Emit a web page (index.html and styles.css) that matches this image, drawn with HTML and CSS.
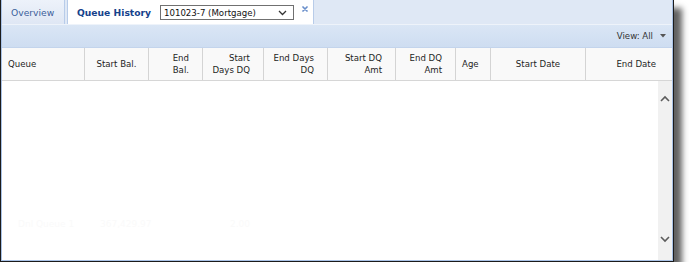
FILE: index.html
```html
<!DOCTYPE html>
<html>
<head>
<meta charset="utf-8">
<link rel="stylesheet" href="styles.css">
</head>
<body>
<div class="frame">
  <div class="panel">
    <div class="tabs">
      <div class="tab tab-overview">Overview</div>
      <div class="tab tab-active">
        <span class="tab-title">Queue History</span>
        <div class="select">
          <span class="select-text">101023-7 (Mortgage)</span>
          <svg class="select-caret" width="9" height="6" viewBox="0 0 9 6"><polyline points="1,1 4.5,4.5 8,1" fill="none" stroke="#333" stroke-width="1.3"/></svg>
        </div>
        <svg class="close" width="6" height="6" viewBox="0 0 6 6"><path d="M1 1 L5 5 M5 1 L1 5" stroke="#6a8fcb" stroke-width="1.7" stroke-linecap="round"/></svg>
      </div>
    </div>
    <div class="toolbar">
      <span class="view">View: All</span>
      <svg class="view-caret" width="6" height="4" viewBox="0 0 6 4"><polygon points="0,0 6,0 3,3.5" fill="#555"/></svg>
    </div>
    <div class="grid-head">
      <div class="hcell left">Queue</div>
      <div class="hcell center">Start Bal.</div>
      <div class="hcell right">End<br>Bal.</div>
      <div class="hcell right">Start<br>Days DQ</div>
      <div class="hcell right">End Days<br>DQ</div>
      <div class="hcell right">Start DQ<br>Amt</div>
      <div class="hcell right">End DQ<br>Amt</div>
      <div class="hcell left">Age</div>
      <div class="hcell center">Start Date</div>
      <div class="hcell right last">End Date</div>
    </div>
    <div class="grid-body">
      <div class="rows">
        <div class="ghost-row">
          <span class="g1">Dnl Queue 1</span>
          <span class="g2">367,429.97</span>
          <span class="g3">2.00</span>
        </div>
      </div>
      <div class="scrollbar">
        <svg width="10" height="7" viewBox="0 0 10 7"><polyline points="1,6 5,2 9,6" fill="none" stroke="#5c5c5c" stroke-width="1.6"/></svg>
        <svg width="10" height="7" viewBox="0 0 10 7"><polyline points="1,1 5,5 9,1" fill="none" stroke="#5c5c5c" stroke-width="1.6"/></svg>
      </div>
    </div>
  </div>
</div>
</body>
</html>
```
FILE: styles.css
```css
html, body {
  margin: 0;
  padding: 0;
  background: #ffffff;
}
body {
  font-family: "DejaVu Sans", Verdana, sans-serif;
  color: #222;
}
.frame {
  width: 674px;
  height: 262px;
  box-sizing: border-box;
  border-left: 1px solid #1b1b1b;
  border-right: 1px solid #1b1b1b;
  border-bottom: 1px solid #1b1b1b;
  box-shadow: 8px 8px 6px rgba(0, 0, 0, 0.62);
  background: #fff;
}
.panel {
  height: 100%;
  box-sizing: border-box;
  border-left: 1px solid #a9c2e6;
  border-right: 1px solid #a9c2e6;
  border-bottom: 1px solid #a9c2e6;
  display: flex;
  flex-direction: column;
}
.tabs {
  height: 25px;
  flex: none;
  display: flex;
  align-items: stretch;
  gap: 2px;
  background: #dfe8f5;
  border-bottom: 1px solid #eef3fa;
  box-sizing: border-box;
}
.tab {
  display: flex;
  align-items: center;
  box-sizing: border-box;
  font-size: 9.2px;
}
.tab-overview {
  width: 63px;
  padding-left: 9px;
  color: #3c5f9b;
  background: linear-gradient(#edf2fa, #dfe7f4);
  border-right: 1px solid #b8cce9;
}
.tab-active {
  width: 247px;
  background: #ffffff;
  border-left: 1px solid #b8cce9;
  border-right: 1px solid #b8cce9;
  padding-left: 9px;
}
.tab-title {
  font-weight: bold;
  color: #15428b;
  width: 83px;
  flex: none;
}
.select {
  width: 134px;
  height: 15px;
  box-sizing: border-box;
  border: 1px solid #707070;
  display: flex;
  align-items: center;
  justify-content: space-between;
  padding: 0 6px 0 3px;
  margin-top: 1px;
}
.select-text {
  font-size: 8.6px;
  color: #111;
}
.close {
  margin-left: 8px;
  margin-top: -6px;
}
.toolbar {
  height: 23px;
  flex: none;
  display: flex;
  align-items: center;
  justify-content: flex-end;
  padding-right: 6px;
  background: linear-gradient(#dae6f5, #ceddf1);
  border-bottom: 1px solid #c3d4ec;
  box-sizing: border-box;
}
.view {
  font-size: 8.6px;
  color: #333;
  margin-right: 7px;
}
.view-caret {
  margin-top: -1px;
}
.grid-head {
  height: 33px;
  flex: none;
  display: grid;
  grid-template-columns: 83px 64px 54px 61px 64px 68px 60px 35px 95px 1fr;
  background: #f9f9f9;
  border-bottom: 1px solid #d6d6d6;
  box-sizing: border-box;
}
.hcell {
  font-size: 8.6px;
  line-height: 12px;
  color: #1e1e1e;
  border-right: 1px solid #d4d4d4;
  display: flex;
  flex-direction: column;
  justify-content: center;
  box-sizing: border-box;
  padding: 0 6px;
}
.hcell.left { text-align: left; }
.hcell.center { text-align: center; }
.hcell.right { text-align: right; padding-right: 13px; }
.hcell.last { border-right: none; padding-right: 16px; }
.grid-body {
  flex: 1;
  display: flex;
  min-height: 0;
}
.rows {
  flex: 1;
  background: #fff;
}
.ghost-row {
  margin-top: 138px;
  display: flex;
  font-size: 9px;
  color: #fafafa;
}
.g1 { margin-left: 16px; width: 82px; }
.g2 { width: 130px; }
.scrollbar {
  width: 14px;
  flex: none;
  background: #f1f1f1;
  display: flex;
  flex-direction: column;
  justify-content: space-between;
  align-items: center;
  padding: 14px 0 17px;
  box-sizing: border-box;
}
```
